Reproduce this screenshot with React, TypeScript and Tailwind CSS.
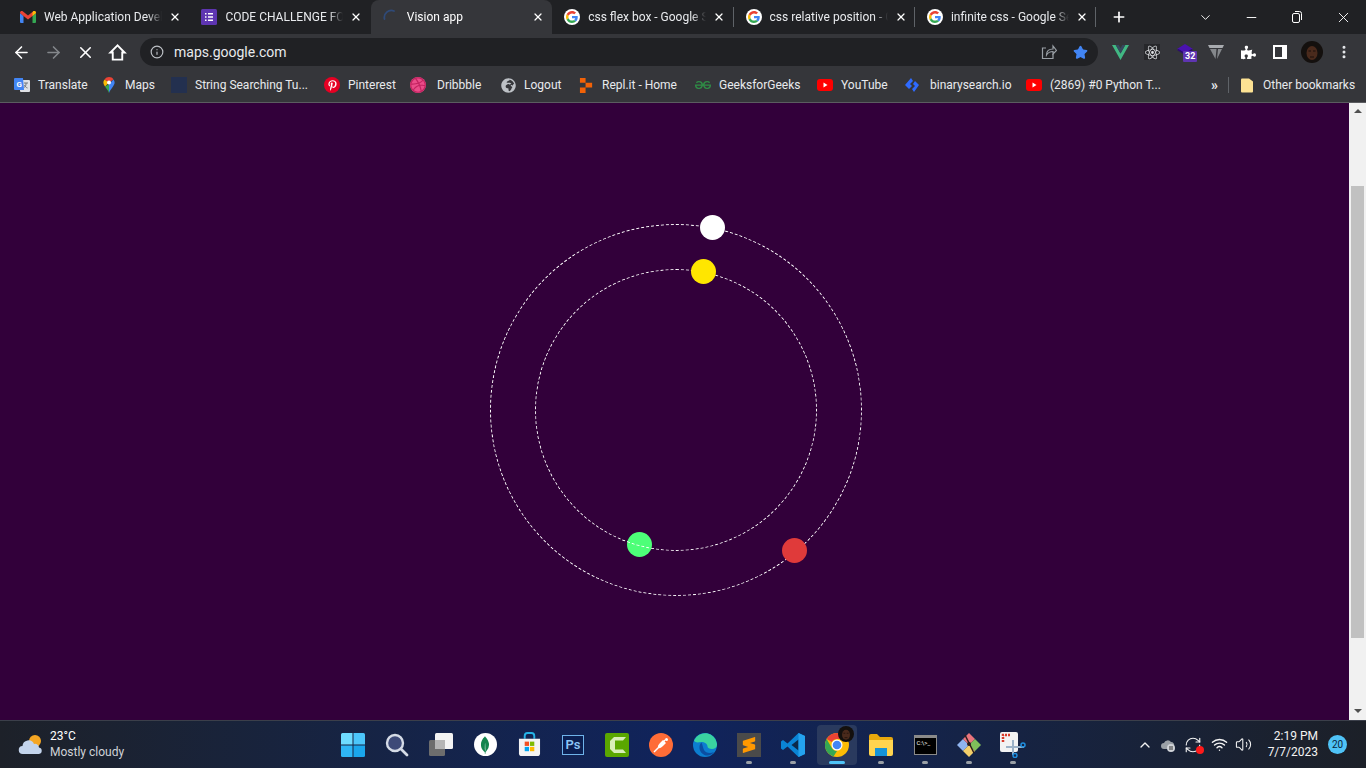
import { ArrowLeft, ArrowRight, ChevronDown, ChevronUp, Info, Minus, MoreVertical, Plus, Star, Volume2, Wifi, X, RefreshCw } from 'lucide-react';
import { FaDribbble, FaGlobeAfrica, FaPinterestP, FaPuzzlePiece } from 'react-icons/fa';
import { SiGeeksforgeeks, SiMongodb, SiReact, SiSublimetext } from 'react-icons/si';

function GoogleIcon() {
    return (
        <span className="flex h-4 w-4 shrink-0 items-center justify-center rounded-full bg-white">
            <svg viewBox="0 0 48 48" className="h-3 w-3">
                <path fill="#EA4335" d="M24 9.5c3.54 0 6.71 1.22 9.21 3.6l6.85-6.85C35.9 2.38 30.47 0 24 0 14.62 0 6.51 5.38 2.56 13.22l7.98 6.19C12.43 13.72 17.74 9.5 24 9.5z" />
                <path fill="#4285F4" d="M46.98 24.55c0-1.57-.15-3.09-.38-4.55H24v9.02h12.94c-.58 2.96-2.26 5.48-4.78 7.18l7.73 6c4.51-4.18 7.09-10.36 7.09-17.65z" />
                <path fill="#FBBC05" d="M10.53 28.59c-.48-1.45-.76-2.99-.76-4.59s.27-3.14.76-4.59l-7.98-6.19C.92 16.46 0 20.12 0 24c0 3.88.92 7.54 2.56 10.78l7.97-6.19z" />
                <path fill="#34A853" d="M24 48c6.48 0 11.93-2.13 15.89-5.81l-7.73-6c-2.15 1.45-4.92 2.3-8.16 2.3-6.26 0-11.57-4.22-13.47-9.91l-7.98 6.19C6.51 42.62 14.62 48 24 48z" />
            </svg>
        </span>
    );
}

function GmailIcon() {
    return (
        <svg viewBox="0 0 16 12" className="h-3 w-4 shrink-0">
            <path fill="#4285F4" d="M0 2v9a1 1 0 0 0 1 1h2.500V5z" />
            <path fill="#34A853" d="M16 2v9a1 1 0 0 1-1 1h-2.500V5z" />
            <path fill="#EA4335" d="M0 2c0-2 2-2.500 3-1.500L8 4.500 13 .5c1-1 3-.5 3 1.500L12.500 5 8 8.500 3.500 5z" />
            <path fill="#FBBC05" d="M12.500 1.700 13 .5c1-1 3-.5 3 1.500l-3.500 3z" />
        </svg>
    );
}

function FormsIcon() {
    return (
        <svg viewBox="0 0 16 16" className="h-4 w-4 shrink-0">
            <rect width="16" height="16" rx="1.500" fill="#5e35b1" />
            <path fill="#fff" d="M4 4h1.500v1.500H4zM7 4h5v1.500H7zM4 7.250h1.500v1.500H4zM7 7.250h5v1.500H7zM4 10.500h1.500V12H4zM7 10.500h5V12H7z" />
        </svg>
    );
}

function SpinnerIcon() {
    return (
        <svg viewBox="0 0 16 16" className="h-4 w-4 shrink-0" fill="none">
            <path d="M1.500 10A7 7 0 0 1 11 2" stroke="#2f4a78" strokeWidth="1.800" strokeLinecap="round" />
        </svg>
    );
}

function Tab({ icon, title, active }: { icon: React.ReactNode; title: string; active?: boolean }) {
    return (
        <div className={active ? 'flex h-[34px] w-[181.400px] items-center rounded-t-lg bg-[#35363a] pl-3 text-white' : 'flex h-[34px] w-[181.400px] items-center pl-3 text-[#e8eaed]'}>
            {icon}
            <span className="ml-2 w-[118px] overflow-hidden text-[12px] whitespace-nowrap [mask-image:linear-gradient(to_right,black_88%,transparent)]">
                {title}
            </span>
            <X size={12} strokeWidth={2.500} className="ml-[7px] shrink-0 text-white" />
        </div>
    );
}

function YoutubeIcon() {
    return (
        <svg viewBox="0 0 16 12" className="h-3 w-4 shrink-0">
            <rect width="16" height="12" rx="3" fill="#ff0000" />
            <path d="M6.500 3.500v5L10.500 6z" fill="#fff" />
        </svg>
    );
}

function TranslateIcon() {
    return (
        <svg viewBox="0 0 16 16" className="h-4 w-4 shrink-0">
            <rect x="6" y="3" width="10" height="12" rx="1" fill="#dfe1e5" />
            <path d="M10 6h4M12 6v1c0 2-1 3-2.500 4M10.500 8c.5 1.500 1.500 2.500 3 3" stroke="#70757a" fill="none" />
            <path d="M1 1h8l1 12H1a1 1 0 0 1-1-1V2a1 1 0 0 1 1-1z" fill="#4285f4" />
            <text x="2.500" y="10" fontSize="8" fontWeight="700" fill="#fff" fontFamily="Roboto, sans-serif">G</text>
        </svg>
    );
}

function MapsIcon() {
    return (
        <svg viewBox="0 0 20 20" className="h-4 w-4 shrink-0">
            <path fill="#34a853" d="M10 20c-1-3-3-5-5-8l5-3z" />
            <path fill="#fbbc04" d="M5 12C3.500 10 3 8.500 3 7c0-1.500.5-3 1.500-4L10 7z" />
            <path fill="#4285f4" d="M10 20c1-3 3-5 5-8 1.500-2 2-3.500 2-5 0-1.500-.5-3-1.500-4L10 9z" />
            <path fill="#ea4335" d="M4.500 3C6 1 8 0 10 0c2.500 0 4.500 1 5.500 3L10 7z" />
            <circle cx="10" cy="7" r="2.500" fill="#fff" />
        </svg>
    );
}

function ReplIcon() {
    return (
        <svg viewBox="0 0 16 16" className="h-[15px] w-[15px] shrink-0" fill="#f26207">
            <path d="M1 0h6v5H1zM7 5h7v5H7zM1 10h6v6H1z" />
        </svg>
    );
}

function BinaryIcon() {
    return (
        <svg viewBox="0 0 16 16" className="mr-[2px] h-4 w-4 shrink-0" fill="#2f6bff">
            <path d="M7 1 1 8l4 4 3-3-2-2 3-3zM11 4l4 4-5 7-2-3 3-3-2-2z" />
        </svg>
    );
}

const bookmarks = [
    { title: 'Translate', icon: <TranslateIcon />, width: 'w-[87px]' },
    { title: 'Maps', icon: <MapsIcon />, width: 'w-[70px]' },
    { title: 'String Searching Tu...', icon: <span className="h-4 w-4 shrink-0 bg-[#23304f]" />, width: 'w-[153px]' },
    {
        title: 'Pinterest',
        icon: (
            <span className="flex h-4 w-4 shrink-0 items-center justify-center rounded-full bg-[#e60023]">
                <FaPinterestP size={11} className="text-white" />
            </span>
        ),
        width: 'w-[86px]',
    },
    {
        title: 'Dribbble',
        icon: (
            <span className="mr-[3px] flex h-4 w-4 shrink-0 items-center justify-center rounded-full bg-[#ea4c89]">
                <FaDribbble size={16} className="text-[#c32361]" />
            </span>
        ),
        width: 'w-[91px]',
    },
    { title: 'Logout', icon: <FaGlobeAfrica size={15} className="shrink-0 text-[#bdc1c6]" />, width: 'w-[78px]' },
    { title: 'Repl.it - Home', icon: <ReplIcon />, width: 'w-[116px]' },
    { title: 'GeeksforGeeks', icon: <SiGeeksforgeeks size={16} className="shrink-0 text-[#2f8d46]" />, width: 'w-[122px]' },
    { title: 'YouTube', icon: <YoutubeIcon />, width: 'w-[87px]' },
    { title: 'binarysearch.io', icon: <BinaryIcon />, width: 'w-[122px]' },
    { title: '(2869) #0 Python T...', icon: <YoutubeIcon />, width: 'w-[138px]' },
];

function HomeIcon() {
    return (
        <svg viewBox="0 0 20 20" className="h-[19px] w-[19px]" fill="none" stroke="#fff" strokeWidth="2" strokeLinejoin="miter">
            <path d="M10 2.500 2.500 10h2.500v7.500h10V10h2.500z" />
        </svg>
    );
}

function ShareIcon() {
    return (
        <svg viewBox="0 0 16 16" className="ml-auto h-4 w-4" fill="none" stroke="#9aa0a6" strokeWidth="1.200">
            <path d="M5 4H1.500v10.500H12V10" />
            <path d="M5.500 11c0-4 2.500-6 6.500-6V2l3.500 4.500L12 10V7.500c-3 0-5 1-6.500 3.500z" />
        </svg>
    );
}

function VueIcon() {
    return (
        <svg viewBox="0 0 16 14" className="h-[15px] w-[17px]">
            <path d="M0 0h3.500L8 8l4.500-8H16L8 14z" fill="#41b883" />
            <path d="M3.500 0h2.800L8 3l1.700-3h2.800L8 8z" fill="#35495e" />
        </svg>
    );
}

function ViteIcon() {
    return (
        <svg viewBox="0 0 16 16" className="h-4 w-4">
            <path d="M0 1h16l-1.500 3H1.500z" fill="#a8abaf" />
            <path d="M2 5h6.500l-1 10zM10 5h4l-5 10z" fill="#85888c" />
        </svg>
    );
}

function RiderIcon() {
    return (
        <svg viewBox="0 0 16 12" className="h-3 w-4">
            <path d="M8 0 16 5 8 10 0 5z" fill="#4a12b0" />
            <path d="M0 6l8 5 8-5-1.500-1L8 9 1.500 5z" fill="#2c0d6e" />
        </svg>
    );
}

function Avatar({ size }: { size: string }) {
    return (
        <svg viewBox="0 0 22 22" className={size}>
            <circle cx="11" cy="11" r="11" fill="#14100e" />
            <ellipse cx="11" cy="12" rx="5.500" ry="7" fill="#4a2a1c" />
            <path d="M7.500 10h2.500M12 10h2.500M9 16h4" stroke="#1b0f0a" />
        </svg>
    );
}

function WeatherIcon() {
    return (
        <svg viewBox="0 0 26 24" className="h-6 w-[26px]">
            <circle cx="17" cy="8" r="6" fill="#f5a623" />
            <path d="M5 21a4 4 0 0 1-.5-8A6 6 0 0 1 16 11a4 4 0 0 1 5 3.500 3.300 3.300 0 0 1 0 6.500z" fill="#c3d4ec" />
        </svg>
    );
}

function WindowsIcon() {
    return (
        <svg viewBox="0 0 24 24" className="h-6 w-6">
            <path d="M0 1.500A1.500 1.500 0 0 1 1.500 0h10v11.500H0z" fill="#6fdcff" />
            <path d="M12.500 0h10A1.500 1.500 0 0 1 24 1.500v10H12.500z" fill="#4cc6fa" />
            <path d="M0 12.500h11.500V24h-10A1.500 1.500 0 0 1 0 22.500z" fill="#2fb6f5" />
            <path d="M12.500 12.500H24v10a1.500 1.500 0 0 1-1.500 1.500h-10z" fill="#1aa6ec" />
        </svg>
    );
}

function SearchIcon() {
    return (
        <svg viewBox="0 0 24 24" className="h-6 w-6" fill="none">
            <circle cx="10" cy="10" r="8" fill="#3d4a78" stroke="#d5dbe6" strokeWidth="2.400" />
            <path d="M16 16l6 6" stroke="#d5dbe6" strokeWidth="2.800" strokeLinecap="round" />
        </svg>
    );
}

function TaskViewIcon() {
    return (
        <svg viewBox="0 0 24 24" className="h-6 w-6">
            <rect x="0" y="7" width="16" height="16" rx="1.500" fill="#6d6d6d" />
            <rect x="6" y="0" width="18" height="16" rx="1.500" fill="#f3f3f3" />
            <rect x="6" y="7" width="10" height="9" fill="#b5b5b5" />
        </svg>
    );
}

function MongoIcon() {
    return (
        <span className="flex h-[23px] w-[23px] items-center justify-center rounded-full bg-white">
            <SiMongodb size={18} className="text-[#13854e]" />
        </span>
    );
}

function StoreIcon() {
    return (
        <svg viewBox="0 0 24 26" className="h-[25px] w-[23px]">
            <path d="M7 7V4a3 3 0 0 1 3-3h4a3 3 0 0 1 3 3v3" fill="none" stroke="#25b4e8" strokeWidth="2" />
            <path d="M1 7h22v15a3 3 0 0 1-3 3H4a3 3 0 0 1-3-3z" fill="#f3f3f3" />
            <rect x="7" y="10" width="4.500" height="4.500" fill="#f25022" />
            <rect x="12.500" y="10" width="4.500" height="4.500" fill="#7fba00" />
            <rect x="7" y="15.500" width="4.500" height="4.500" fill="#00a4ef" />
            <rect x="12.500" y="15.500" width="4.500" height="4.500" fill="#ffb900" />
        </svg>
    );
}

function PsIcon() {
    return (
        <span className="flex h-5 w-[22px] items-center justify-center border border-[#6fb3ea] bg-[#0b1f52] text-[13px] font-semibold text-[#8cc4f5]">
            Ps
        </span>
    );
}

function CamtasiaIcon() {
    return (
        <svg viewBox="0 0 24 24" className="h-6 w-6">
            <rect width="24" height="24" rx="2" fill="#5aa700" />
            <path d="M21 4H9L5 8v8l4 4h12l-3-3.500H10V7.500h8z" fill="#d8eeb8" />
        </svg>
    );
}

function PostmanIcon() {
    return (
        <svg viewBox="0 0 24 24" className="h-6 w-6" fill="none">
            <circle cx="12" cy="12" r="12" fill="#ff6c37" />
            <path d="M5 19l4-4 7-8" stroke="#fff" strokeWidth="1.500" />
            <path d="M9 15c-.5-2 .5-3.500 2-5l3-3 3 3-3 3c-1.500 1.500-3 2.500-5 2z" fill="#fff" />
            <circle cx="17.500" cy="6.500" r="1.500" fill="#fff" />
        </svg>
    );
}

function EdgeIcon() {
    return (
        <svg viewBox="0 0 24 24" className="h-6 w-6">
            <circle cx="12" cy="12" r="12" fill="#0c7ed0" />
            <path d="M1 7.500A12 12 0 0 1 24 11c.3 3-2 5-5 5-2.500 0-4.500-1-4.500-2.500 0-2-2-4.500-6-4.500-3 0-5.500 1.500-7.500-1.500z" fill="#3ad3a0" />
            <path d="M8.500 9.500c-3.500 3-2.500 10 3 12.500 3.500 1.500 7.500 0 9.500-3-4 2-8.500 1-10-2-1-2-1.500-5.500-2.500-7.500z" fill="#0b4ea2" />
        </svg>
    );
}

function SublimeIcon() {
    return (
        <span className="flex h-6 w-6 items-center justify-center bg-[#4a4a4a]">
            <SiSublimetext size={16} className="text-[#ff9800]" />
        </span>
    );
}

function VscodeIcon() {
    return (
        <svg viewBox="0 0 24 24" className="h-6 w-6">
            <path d="M17.500 0 24 3v18l-6.500 3-11-10.500L2 17l-2-1.500V8.500L2 7l4.500 3.500z" fill="#0a84d6" />
            <path d="M17.500 6.500 10.500 12l7 5.500z" fill="#0b2a4a" />
            <path d="M17.500 0 24 3v18l-6.500 3z" fill="#24a2ee" />
        </svg>
    );
}

function ChromeIcon() {
    return (
        <svg viewBox="0 0 24 24" className="h-6 w-6">
            <circle cx="12" cy="12" r="12" fill="#fbbc04" />
            <path d="M12 0a12 12 0 0 1 10.400 6H12a6 6 0 0 0-5.200 3L1.600 6A12 12 0 0 1 12 0z" fill="#ea4335" />
            <path d="M1.600 6 6.800 15a6 6 0 0 0 5.200 3l-3.500 5.500A12 12 0 0 1 1.600 6z" fill="#34a853" />
            <circle cx="12" cy="12" r="5.500" fill="#fff" />
            <circle cx="12" cy="12" r="4.300" fill="#4285f4" />
        </svg>
    );
}

function FilesIcon() {
    return (
        <svg viewBox="0 0 24 22" className="h-[22px] w-6">
            <path d="M0 2a2 2 0 0 1 2-2h6l3 3h11a2 2 0 0 1 2 2v4H0z" fill="#e8a80c" />
            <path d="M0 6h24v14a2 2 0 0 1-2 2H2a2 2 0 0 1-2-2z" fill="#ffd44f" />
            <rect x="6" y="14" width="12" height="8" fill="#1593d8" />
        </svg>
    );
}

function TerminalIcon() {
    return (
        <span className="flex h-[20px] w-[23px] flex-col border border-[#8a8a8a] bg-black">
            <span className="h-[2px] bg-[#8a8a8a]" />
            <span className="pl-[2px] text-[6px] leading-[10px] text-white">C:\&gt;_</span>
        </span>
    );
}

function GitIcon() {
    return (
        <svg viewBox="0 0 26 26" className="h-[26px] w-[26px]">
            <path d="M7 7 1 13l6 6 6-6z" fill="#8fb4f0" />
            <path d="M13 1l6 6-6 6-6-6z" fill="#e9747c" />
            <path d="M19 7l6 6-6 6-6-6z" fill="#7fbf5a" />
            <path d="M7 19l6-6 6 6-6 6z" fill="#f4cf6a" />
            <path d="M9 3l9 18" stroke="#2b1d1d" strokeWidth="1.500" />
            <circle cx="13" cy="12" r="2" fill="#2b1d1d" />
        </svg>
    );
}

function SnipIcon() {
    return (
        <svg viewBox="0 0 26 26" className="h-[26px] w-[26px]">
            <rect x="0" y="0" width="18" height="20" rx="2" fill="#f3f3f3" />
            <path d="M3 10V3h7" stroke="#d83b2a" strokeWidth="2.500" strokeDasharray="2 1" fill="none" />
            <path d="M6 15h18M13 8v15" stroke="#9db2c7" strokeWidth="2" />
            <circle cx="23" cy="13" r="2" fill="none" stroke="#1f8fe0" strokeWidth="1.500" />
            <circle cx="15" cy="23.500" r="2" fill="none" stroke="#1f8fe0" strokeWidth="1.500" />
        </svg>
    );
}

function TaskItem({ children, running, active }: { children: React.ReactNode; running?: boolean; active?: boolean }) {
    return (
        <div className={active ? 'relative mx-[2px] flex h-[40px] w-[40px] shrink-0 items-center justify-center rounded bg-[#2a3a5e]' : 'relative flex h-[40px] w-[44px] shrink-0 items-center justify-center'}>
            {children}
            {running && <span className="absolute bottom-[1px] left-1/2 h-[3px] w-[6px] -translate-x-1/2 rounded-full bg-[#9aa0a6]" />}
            {active && <span className="absolute bottom-[1px] left-1/2 h-[3px] w-4 -translate-x-1/2 rounded-full bg-[#4fc3f7]" />}
        </div>
    );
}

export default function App() {
    return (
        <div className="flex h-[768px] w-[1366px] flex-col overflow-hidden bg-[#32003a] [font-family:Roboto,sans-serif]">
            <div className="flex h-[34px] shrink-0 items-center bg-[#202124] pl-2">
                <Tab icon={<GmailIcon />} title="Web Application Developer" />
                <Tab icon={<FormsIcon />} title="CODE CHALLENGE FORM" />
                <Tab icon={<SpinnerIcon />} title="Vision app" active />
                <Tab icon={<GoogleIcon />} title="css flex box - Google Search" />
                <span className="-ml-[1px] h-5 w-px bg-[#5f6368]" />
                <Tab icon={<GoogleIcon />} title="css relative position - Google" />
                <span className="-ml-[1px] h-5 w-px bg-[#5f6368]" />
                <Tab icon={<GoogleIcon />} title="infinite css - Google Search" />
                <span className="-ml-[1px] h-5 w-px bg-[#5f6368]" />
                <Plus size={16} strokeWidth={2.500} className="ml-[15px] text-white" />
                <div className="ml-auto flex items-center text-white">
                    <div className="flex w-[46px] justify-center"><ChevronDown size={15} strokeWidth={1.500} /></div>
                    <div className="flex w-[46px] justify-center"><Minus size={15} strokeWidth={1.500} /></div>
                    <div className="flex w-[46px] justify-center">
                        <svg viewBox="0 0 12 14" className="h-[14px] w-3" fill="none" stroke="#fff">
                            <rect x="1.500" y="3.500" width="7" height="9" rx="1.500" />
                            <path d="M4 1.500h4.500a2 2 0 0 1 2 2V10" />
                        </svg>
                    </div>
                    <div className="flex w-[46px] justify-center"><X size={17} strokeWidth={1.300} /></div>
                </div>
            </div>

            <div className="flex h-[36px] shrink-0 items-center bg-[#35363a] pl-[5px] text-white">
                <div className="flex w-8 justify-center"><ArrowLeft size={19} strokeWidth={2} /></div>
                <div className="flex w-8 justify-center text-[#84878b]"><ArrowRight size={19} strokeWidth={2} /></div>
                <div className="flex w-8 justify-center"><X size={19} strokeWidth={2} /></div>
                <div className="flex w-8 justify-center"><HomeIcon /></div>
                <div className="ml-[7px] flex h-7 w-[958px] items-center rounded-full bg-[#202124] pr-[10px] pl-[10px]">
                    <Info size={14} className="text-[#bdc1c6]" />
                    <span className="ml-[10px] text-[14px] text-[#e8eaed]">maps.google.com</span>
                    <ShareIcon />
                    <Star size={15} className="ml-[16px] text-[#4285f4]" fill="#4285f4" />
                </div>
                <div className="ml-[6px] flex w-8 justify-center"><VueIcon /></div>
                <div className="flex w-8 justify-center">
                    <span className="flex h-4 w-4 items-center justify-center bg-[#26272a]">
                        <SiReact size={15} className="text-[#e0e2e5]" />
                    </span>
                </div>
                <div className="relative flex w-8 justify-center">
                    <span className="mb-[4px] ml-[2px]"><RiderIcon /></span>
                    <span className="absolute top-[7px] left-[15px] rounded-[1px] bg-[#5e35b1] px-[2px] text-[9px] leading-[11px] font-bold text-white">32</span>
                </div>
                <div className="flex w-8 justify-center"><ViteIcon /></div>
                <div className="flex w-8 justify-center"><FaPuzzlePiece size={15} className="text-white" /></div>
                <div className="flex w-8 justify-center">
                    <span className="h-[14px] w-[14px] border-2 border-r-[5px] border-white" />
                </div>
                <div className="flex w-8 justify-center"><Avatar size="h-[22px] w-[22px]" /></div>
                <div className="flex w-8 justify-center"><MoreVertical size={16} strokeWidth={2.500} className="text-[#e8eaed]" /></div>
            </div>

            <div className="flex h-[33px] shrink-0 items-center border-b border-[#5b5c60] bg-[#35363a] pb-[2px] pl-[14px] text-[12px] text-[#e8eaed]">
                {bookmarks.map((b) => (
                    <div key={b.title} className={`flex shrink-0 items-center gap-2 whitespace-nowrap ${b.width}`}>
                        {b.icon}
                        <span>{b.title}</span>
                    </div>
                ))}
                <span className="ml-[47px] text-[14px] leading-none font-bold">»</span>
                <span className="ml-[10px] h-4 w-px bg-[#5f6368]" />
                <svg viewBox="0 0 12 14" className="ml-[12px] h-[15px] w-[12px] shrink-0">
                    <path d="M0 1a1 1 0 0 1 1-1h7l4 3v10a1 1 0 0 1-1 1H1a1 1 0 0 1-1-1z" fill="#fde293" />
                </svg>
                <span className="ml-[10px] whitespace-nowrap">Other bookmarks</span>
            </div>

            <div className="flex min-h-0 flex-1">
                <main className="flex-1 bg-[#32003a] pt-[121px] pl-[490px]">
                    <div className="relative h-[372px] w-[372px] rounded-full border border-dashed border-white">
                        <span className="absolute top-[-10px] left-[209px] h-[25px] w-[25px] rounded-full bg-white" />
                        <span className="absolute top-[313px] left-[291px] h-[25px] w-[25px] rounded-full bg-[#e03a3a]" />
                        <span className="absolute top-[307px] left-[136px] h-[25px] w-[25px] rounded-full bg-[#4dff78]" />
                        <div className="absolute top-[44px] left-[44px] h-[282px] w-[282px] rounded-full border border-dashed border-white" />
                        <span className="absolute top-[34px] left-[200px] h-[25px] w-[25px] rounded-full bg-[#ffe600]" />
                    </div>
                </main>
                <aside className="flex w-[17px] shrink-0 flex-col items-center bg-[#f1f1f1] pt-[6px]">
                    <span className="h-0 w-0 border-x-[4px] border-b-[4px] border-x-transparent border-b-[#505050]" />
                    <span className="mt-[73px] h-[452px] w-[13px] shrink-0 bg-[#c1c1c1]" />
                    <span className="mt-[71px] h-0 w-0 border-x-[4px] border-t-[4px] border-x-transparent border-t-[#505050]" />
                </aside>
            </div>

            <footer className="flex h-[48px] shrink-0 items-center border-t border-[#3b3f4a] bg-gradient-to-r from-[#1d2129] via-[#10235c] to-[#1c2028] text-white">
                <div className="flex w-[331px] shrink-0 items-center pl-[18px]">
                    <WeatherIcon />
                    <div className="-mt-[2px] ml-[6px] text-[12px] leading-[16px]">
                        <div>23°C</div>
                        <div className="text-[#d0d3d8]">Mostly cloudy</div>
                    </div>
                </div>
                <TaskItem><WindowsIcon /></TaskItem>
                <TaskItem><SearchIcon /></TaskItem>
                <TaskItem><TaskViewIcon /></TaskItem>
                <TaskItem><MongoIcon /></TaskItem>
                <TaskItem><StoreIcon /></TaskItem>
                <TaskItem><PsIcon /></TaskItem>
                <TaskItem><CamtasiaIcon /></TaskItem>
                <TaskItem><PostmanIcon /></TaskItem>
                <TaskItem><EdgeIcon /></TaskItem>
                <TaskItem running><SublimeIcon /></TaskItem>
                <TaskItem running><VscodeIcon /></TaskItem>
                <TaskItem active>
                    <ChromeIcon />
                    <span className="absolute top-[1px] right-[3px]"><Avatar size="h-4 w-4" /></span>
                </TaskItem>
                <TaskItem running><FilesIcon /></TaskItem>
                <TaskItem running><TerminalIcon /></TaskItem>
                <TaskItem running><GitIcon /></TaskItem>
                <TaskItem running><SnipIcon /></TaskItem>

                <div className="ml-[102px] flex shrink-0 items-center text-[#f3f3f3]">
                    <ChevronUp size={16} />
                    <svg viewBox="0 0 16 14" className="ml-[7px] h-[14px] w-4">
                        <path d="M4 11a3 3 0 0 1 0-6 4 4 0 0 1 7-1 3 3 0 0 1 3 4v3z" fill="#9aa0a6" />
                        <circle cx="11" cy="10" r="4" fill="#d0d3d8" />
                        <path d="M10 8v4M12 8v4" stroke="#333" />
                    </svg>
                    <div className="relative ml-[8px]">
                        <RefreshCw size={18} strokeWidth={1.500} />
                        <span className="absolute right-[-2px] bottom-0 h-2 w-2 rounded-full bg-[#ff1a1a]" />
                    </div>
                    <Wifi size={17} strokeWidth={2} className="ml-[9px]" />
                    <Volume2 size={17} strokeWidth={1.500} className="ml-[7px]" />
                </div>
                <div className="-mt-[2px] w-[66px] shrink-0 text-right text-[12px] leading-[16px] text-[#f3f3f3]">
                    <div>2:19 PM</div>
                    <div>7/7/2023</div>
                </div>
                <span className="ml-[10px] flex h-[19px] w-[19px] shrink-0 items-center justify-center rounded-full bg-[#4fc3f7] text-[10px] text-[#0b1f3a]">20</span>
            </footer>
        </div>
    );
}
